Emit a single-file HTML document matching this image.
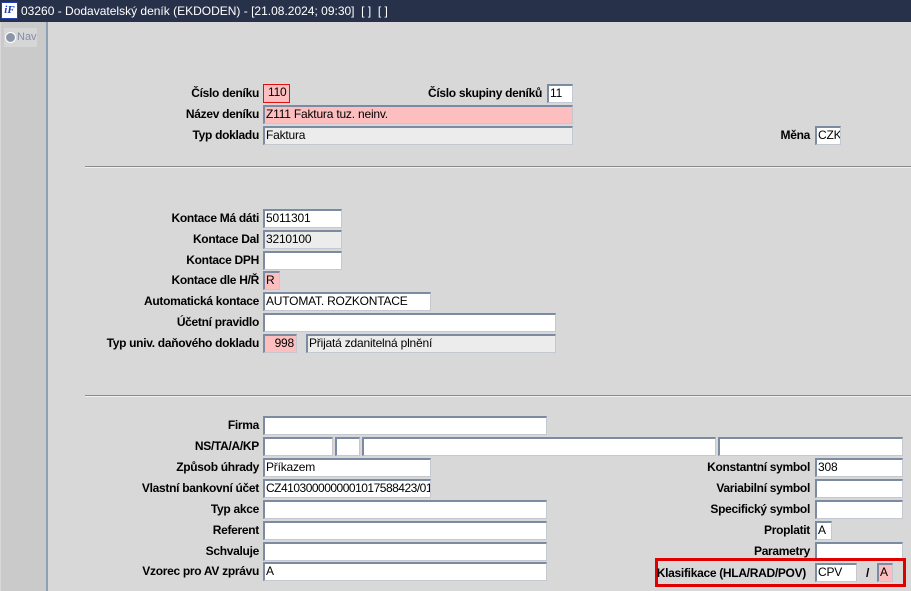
<!DOCTYPE html>
<html><head><meta charset="utf-8"><style>
*{margin:0;padding:0;box-sizing:border-box}
body{width:911px;height:591px;background:#d8d8d8;font-family:"Liberation Sans",Arial,sans-serif;font-size:12px;position:relative;overflow:hidden;color:#000}
.tb{position:absolute;left:0;top:0;width:911px;height:22px;background:#27324a;color:#fff;font-size:12px;line-height:22px;padding-left:21px}
.logo{position:absolute;left:1px;top:2px;width:17px;height:17px;background:#fff;border:1px solid #2040c0;color:#1a3ab8;font-weight:bold;font-style:italic;font-size:11px;line-height:15px;text-align:center;font-family:"Liberation Serif",serif}
.nav{position:absolute;left:1px;top:22px;width:47px;height:569px;background:#cacaca;border-right:2px solid #8fa0b6}
.navb{position:absolute;left:3px;top:6px;width:33px;height:19px;background:#d6d6d6;color:#8090a8;font-size:11px;line-height:19px;padding-left:13px}
.navb:before{content:"";position:absolute;left:1px;top:4px;width:9px;height:9px;border-radius:50%;background:#8a96a8;border:1px solid #fff}
.l{position:absolute;font-weight:bold;text-align:right;height:18px;line-height:18px;white-space:nowrap;letter-spacing:-0.3px}
.i{position:absolute;height:19px;background:#fff;border:1px solid #c4c8d0;border-top:2px solid #7d8ba2;border-left:2px solid #7d8ba2;line-height:15px;padding-left:1px;white-space:nowrap;overflow:hidden;font-size:12px;letter-spacing:-0.2px}
.p{background:#fcbebe}.g{background:#ececec}
.sep{position:absolute;left:85px;width:826px;height:1px;background:#8a8a8a}
.sep:after{content:"";position:absolute;left:0;top:1px;width:826px;height:1px;background:#f0f0f0}
</style></head><body>
<div class="tb"><div class="logo">iF</div>03260 - Dodavatelský deník (EKDODEN) - [21.08.2024; 09:30]&nbsp; [ ]&nbsp; [ ]</div>
<div class="nav"><div class="navb">Nav</div></div>

<div class="l" style="right:652px;top:84px">Číslo deníku</div>
<div class="i p" style="left:263px;top:84px;width:27px;border:1px solid #e01010;padding-left:4px">110</div>
<div class="l" style="right:369px;top:84px">Číslo skupiny deníků</div>
<div class="i" style="left:547px;top:84px;width:26px">11</div>
<div class="l" style="right:652px;top:105px">Název deníku</div>
<div class="i p" style="left:263px;top:105px;width:310px">Z111 Faktura tuz. neinv.</div>
<div class="l" style="right:652px;top:126px">Typ dokladu</div>
<div class="i g" style="left:263px;top:126px;width:310px">Faktura</div>
<div class="l" style="right:101px;top:126px">Měna</div>
<div class="i" style="left:815px;top:126px;width:26px">CZK</div>

<div class="sep" style="top:166px"></div>

<div class="l" style="right:652px;top:209px">Kontace Má dáti</div>
<div class="i" style="left:263px;top:209px;width:79px">5011301</div>
<div class="l" style="right:652px;top:230px">Kontace Dal</div>
<div class="i g" style="left:263px;top:230px;width:79px">3210100</div>
<div class="l" style="right:652px;top:251px">Kontace DPH</div>
<div class="i" style="left:263px;top:251px;width:79px"></div>
<div class="l" style="right:652px;top:271px">Kontace dle H/Ř</div>
<div class="i p" style="left:263px;top:271px;width:17px">R</div>
<div class="l" style="right:652px;top:292px">Automatická kontace</div>
<div class="i" style="left:263px;top:292px;width:168px">AUTOMAT. ROZKONTACE</div>
<div class="l" style="right:652px;top:313px">Účetní pravidlo</div>
<div class="i" style="left:263px;top:313px;width:293px"></div>
<div class="l" style="right:652px;top:334px">Typ univ. daňového dokladu</div>
<div class="i p" style="left:263px;top:334px;width:34px;text-align:right;padding-right:2px">998</div>
<div class="i g" style="left:306px;top:334px;width:250px">Přijatá zdanitelná plnění</div>

<div class="sep" style="top:395px"></div>

<div class="l" style="right:652px;top:416px">Firma</div>
<div class="i" style="left:263px;top:416px;width:284px"></div>
<div class="l" style="right:652px;top:437px">NS/TA/A/KP</div>
<div class="i" style="left:263px;top:437px;width:70px"></div>
<div class="i" style="left:335px;top:437px;width:25px"></div>
<div class="i" style="left:362px;top:437px;width:354px"></div>
<div class="i" style="left:718px;top:437px;width:185px"></div>
<div class="l" style="right:652px;top:458px">Způsob úhrady</div>
<div class="i" style="left:263px;top:458px;width:168px">Příkazem</div>
<div class="l" style="right:101px;top:458px">Konstantní symbol</div>
<div class="i" style="left:815px;top:458px;width:88px">308</div>
<div class="l" style="right:652px;top:479px">Vlastní bankovní účet</div>
<div class="i" style="left:263px;top:479px;width:168px;letter-spacing:-0.5px">CZ4103000000001017588423/0100</div>
<div class="l" style="right:101px;top:479px">Variabilní symbol</div>
<div class="i" style="left:815px;top:479px;width:88px"></div>
<div class="l" style="right:652px;top:500px">Typ akce</div>
<div class="i" style="left:263px;top:500px;width:284px"></div>
<div class="l" style="right:101px;top:500px">Specifický symbol</div>
<div class="i" style="left:815px;top:500px;width:88px"></div>
<div class="l" style="right:652px;top:521px">Referent</div>
<div class="i" style="left:263px;top:521px;width:284px"></div>
<div class="l" style="right:101px;top:521px">Proplatit</div>
<div class="i" style="left:815px;top:521px;width:17px">A</div>
<div class="l" style="right:652px;top:542px">Schvaluje</div>
<div class="i" style="left:263px;top:542px;width:284px"></div>
<div class="l" style="right:101px;top:542px">Parametry</div>
<div class="i" style="left:815px;top:542px;width:88px"></div>
<div class="l" style="right:652px;top:562px">Vzorec pro AV zprávu</div>
<div class="i" style="left:263px;top:562px;width:284px">A</div>

<div style="position:absolute;left:655px;top:558px;width:251px;height:29px;border:3px solid #e00000"></div>
<div class="l" style="right:105px;top:564px">Klasifikace (HLA/RAD/POV)</div>
<div class="i" style="left:815px;top:563px;width:42px">CPV</div>
<div class="l" style="left:866px;top:564px">/</div>
<div class="i p" style="left:877px;top:563px;width:16px">A</div>
</body></html>
